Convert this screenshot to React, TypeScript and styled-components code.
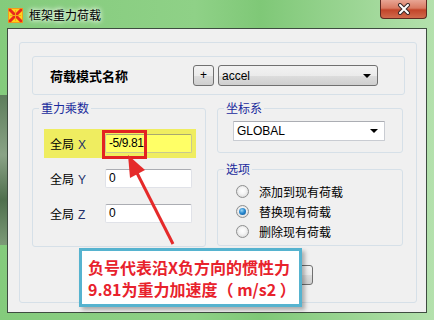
import React from "react";
import styled, { createGlobalStyle } from "styled-components";

const GlobalStyle = createGlobalStyle`
  html, body {
    margin: 0;
    padding: 0;
    background: #ffffff;
  }
  * {
    box-sizing: border-box;
  }
`;

const Window = styled.div`
  position: relative;
  width: 434px;
  height: 320px;
  padding: 0 7px 7px 7px;
  display: flex;
  flex-direction: column;
  font-family: "Noto Sans CJK SC", "Liberation Sans", sans-serif;
  background:
    linear-gradient(180deg, #5d7d5b, #8aa386 40%, #4f6f4d 70%, #7d9b78) 0 95px / 7px 150px no-repeat,
    linear-gradient(90deg, #84cb7c 0%, #8fd187 45%, #7fc877 60%, #b4e1ad 100%);
  overflow: hidden;
`;

const TitleBar = styled.div`
  height: 28px;
  display: flex;
  align-items: flex-start;
`;

const AppIcon = styled.svg`
  width: 15px;
  height: 15px;
  margin: 8px 0 0 1px;
`;

const Title = styled.span`
  margin: 6px 0 0 6px;
  font-size: 12px;
  line-height: 18px;
  color: #000;
  text-shadow: 0 0 6px #ffffff, 0 0 4px #ffffff;
`;

const CloseButton = styled.div`
  margin-left: auto;
  width: 47px;
  height: 19px;
  border: 1px solid #5e2a22;
  border-top: none;
  border-radius: 0 0 4px 4px;
  background: linear-gradient(180deg, #e8a594 0%, #d97a62 45%, #c2452a 55%, #d06a4c 100%);
  display: flex;
  align-items: center;
  justify-content: center;
  svg {
    width: 14px;
    height: 12px;
  }
`;

const Client = styled.div`
  flex: 1;
  border: 1px solid #3e4c40;
  background: #f0f0f0;
  padding: 13px 9px 9px 11px;
  display: flex;
`;

const Panel = styled.div`
  flex: 1;
  border: 1px solid #d6e0e8;
  border-radius: 3px;
  padding: 13px 11px 17px 12px;
  display: flex;
  flex-direction: column;
`;

const ModeGroup = styled.div`
  height: 39px;
  border: 1px solid #d6e0e8;
  border-radius: 3px;
  display: flex;
  align-items: center;
  padding-left: 17px;
`;

const ModeLabel = styled.span`
  width: 143px;
  font-size: 13px;
  font-weight: 700;
  color: #000;
`;

const PlusButton = styled.button`
  width: 21px;
  height: 21px;
  padding: 0;
  margin-right: 4px;
  border: 1px solid #707070;
  border-radius: 3px;
  background: linear-gradient(180deg, #f2f2f2 0%, #ebebeb 50%, #dddddd 51%, #cfcfcf 100%);
  font-family: "Liberation Sans", sans-serif;
  font-size: 12px;
  line-height: 19px;
  color: #000;
`;

const Select = styled.div<{ $width: number; $flat?: boolean }>`
  width: ${(p) => p.$width}px;
  height: ${(p) => (p.$flat ? 20 : 21)}px;
  border: 1px solid ${(p) => (p.$flat ? "#c9ccd2" : "#707070")};
  border-top-color: ${(p) => (p.$flat ? "#abadb3" : "#707070")};
  border-radius: ${(p) => (p.$flat ? 1 : 3)}px;
  background: ${(p) =>
    p.$flat
      ? "#ffffff"
      : "linear-gradient(180deg, #f2f2f2 0%, #ebebeb 50%, #dddddd 51%, #cfcfcf 100%)"};
  display: flex;
  align-items: center;
  padding: 0 6px 0 3px;
  font-family: "Liberation Sans", sans-serif;
  font-size: 12px;
  color: #000;
  span {
    flex: 1;
  }
`;

const Caret = styled.i`
  width: 0;
  height: 0;
  border-left: 4px solid transparent;
  border-right: 4px solid transparent;
  border-top: 4px solid #000;
`;

const Columns = styled.div`
  margin-top: 6px;
  display: grid;
  grid-template-columns: 174px 186px;
  column-gap: 11px;
`;

const Group = styled.fieldset`
  margin: 0;
  padding: 0;
  border: 1px solid #d6e0e8;
  border-radius: 3px;
  min-width: 0;
`;

const Legend = styled.legend`
  margin-left: 6px;
  padding: 0 2px;
  font-size: 12px;
  line-height: 14px;
  color: #1a2a9c;
`;

const GroupBody = styled.div<{ $pad: string }>`
  padding: ${(p) => p.$pad};
`;

const Stack = styled.div`
  display: flex;
  flex-direction: column;
  gap: 9px;
`;

const FieldRow = styled.div<{ $marked?: boolean }>`
  height: 29px;
  display: flex;
  align-items: center;
  padding-left: 6px;
  margin-bottom: 6px;
  background: ${(p) => (p.$marked ? "#efed60" : "transparent")};
`;

const FieldLabel = styled.span`
  width: 55px;
  font-size: 12px;
  color: #000;
  b {
    font-weight: 400;
    font-family: "Liberation Sans", sans-serif;
    margin-left: 4px;
    color: #24306a;
  }
`;

const TextBox = styled.div<{ $marked?: boolean }>`
  width: 87px;
  height: 19px;
  border: 1px solid ${(p) => (p.$marked ? "#c8c890" : "#e0e2e8")};
  border-top-color: ${(p) => (p.$marked ? "#a8a870" : "#abadb3")};
  border-radius: 2px;
  background: ${(p) => (p.$marked ? "#ffff66" : "#ffffff")};
  padding-left: 3px;
  font-family: "Liberation Sans", sans-serif;
  font-size: 12px;
  letter-spacing: -0.4px;
  line-height: 17px;
  color: #000;
`;

const RadioRow = styled.label`
  height: 20px;
  display: flex;
  align-items: center;
  gap: 10px;
  font-size: 12px;
  color: #000;
`;

const RadioDot = styled.span<{ $on?: boolean }>`
  width: 13px;
  height: 13px;
  border-radius: 50%;
  border: 1px solid #8e8f8f;
  background: radial-gradient(circle at 50% 45%, #ffffff 0%, #f4f4f4 40%, #d0d0d0 100%);
  display: flex;
  align-items: center;
  justify-content: center;
  &::after {
    content: "";
    display: ${(p) => (p.$on ? "block" : "none")};
    width: 7px;
    height: 7px;
    border-radius: 50%;
    background: radial-gradient(circle at 40% 35%, #9fd8f5 0%, #2a8ad0 45%, #0d4f8e 100%);
  }
`;

const ButtonRow = styled.div`
  margin-top: 18px;
  display: flex;
  justify-content: flex-end;
  gap: 6px;
  padding-right: 92px;
`;

const DialogButton = styled.button`
  width: 75px;
  height: 20px;
  border: 1px solid #707070;
  border-radius: 3px;
  background: linear-gradient(180deg, #f2f2f2 0%, #ebebeb 50%, #dddddd 51%, #cfcfcf 100%);
  padding: 0;
`;

const MarkBox = styled.div`
  position: absolute;
  left: 102px;
  top: 130px;
  width: 45px;
  height: 29px;
  border: 3px solid #e32222;
  pointer-events: none;
`;

const Arrow = styled.svg`
  position: absolute;
  left: 0;
  top: 0;
  width: 434px;
  height: 320px;
  pointer-events: none;
`;

const Callout = styled.div`
  position: absolute;
  left: 79px;
  top: 248px;
  width: 223px;
  height: 59px;
  border: 3px solid #56b3cf;
  background: #ffffff;
  box-shadow: 3px 3px 4px rgba(0, 0, 0, 0.28);
  padding: 5px 0 0 6px;
  font-family: "Noto Sans CJK SC", "Liberation Sans", sans-serif;
  font-size: 16px;
  font-weight: 700;
  line-height: 22px;
  color: #e8222c;
  white-space: pre;
`;

const rows = [
  { axis: "X", value: "-5/9.81", marked: true },
  { axis: "Y", value: "0" },
  { axis: "Z", value: "0" },
];

const options = [
  { text: "添加到现有荷载" },
  { text: "替换现有荷载", on: true },
  { text: "删除现有荷载" },
];

export default function App() {
  return (
    <>
      <GlobalStyle />
      <Window>
        <TitleBar>
          <AppIcon viewBox="0 0 15 15">
            <rect x="0" y="0" width="15" height="15" fill="#ffd21a" />
            <path d="M1 1 L14 14 M14 1 L1 14" stroke="#e8261c" strokeWidth="3" />
            <path d="M0 0 H15 V15 H0 Z" fill="none" stroke="#f08a1c" strokeWidth="1.5" />
            <path d="M2 7.5 H13 M7.5 2 V13" stroke="#f6a21a" strokeWidth="1" />
          </AppIcon>
          <Title>框架重力荷载</Title>
          <CloseButton>
            <svg viewBox="0 0 14 12">
              <path d="M3 2 L11 10 M11 2 L3 10" stroke="#3a2a2a" strokeWidth="4" strokeLinecap="round" />
              <path d="M3 2 L11 10 M11 2 L3 10" stroke="#ffffff" strokeWidth="2" strokeLinecap="round" />
            </svg>
          </CloseButton>
        </TitleBar>

        <Client>
          <Panel>
            <ModeGroup>
              <ModeLabel>荷载模式名称</ModeLabel>
              <PlusButton>+</PlusButton>
              <Select $width={160}>
                <span>accel</span>
                <Caret />
              </Select>
            </ModeGroup>

            <Columns>
              <Group>
                <Legend>重力乘数</Legend>
                <GroupBody $pad="14px 9px 12px 11px">
                  {rows.map((r) => (
                    <FieldRow key={r.axis} $marked={r.marked}>
                      <FieldLabel>
                        全局<b>{r.axis}</b>
                      </FieldLabel>
                      <TextBox $marked={r.marked}>{r.value}</TextBox>
                    </FieldRow>
                  ))}
                </GroupBody>
              </Group>

              <Stack>
                <Group>
                  <Legend>坐标系</Legend>
                  <GroupBody $pad="6px 0 11px 15px">
                    <Select $width={152} $flat>
                      <span>GLOBAL</span>
                      <Caret />
                    </Select>
                  </GroupBody>
                </Group>
                <Group>
                  <Legend>选项</Legend>
                  <GroupBody $pad="5px 0 4px 18px">
                    {options.map((o) => (
                      <RadioRow key={o.text}>
                        <RadioDot $on={o.on} />
                        {o.text}
                      </RadioRow>
                    ))}
                  </GroupBody>
                </Group>
              </Stack>
            </Columns>

            <ButtonRow>
              <DialogButton />
              <DialogButton />
            </ButtonRow>
          </Panel>
        </Client>

        <MarkBox />
        <Arrow viewBox="0 0 434 320">
          <line x1="173" y1="244" x2="136" y2="171" stroke="#e52a2a" strokeWidth="3" />
          <polygon points="128,155 130,178 145,170" fill="#e52a2a" />
        </Arrow>
        <Callout>
          {"负号代表沿X负方向的惯性力\n9.81为重力加速度（ m/s2 ）"}
        </Callout>
      </Window>
    </>
  );
}
